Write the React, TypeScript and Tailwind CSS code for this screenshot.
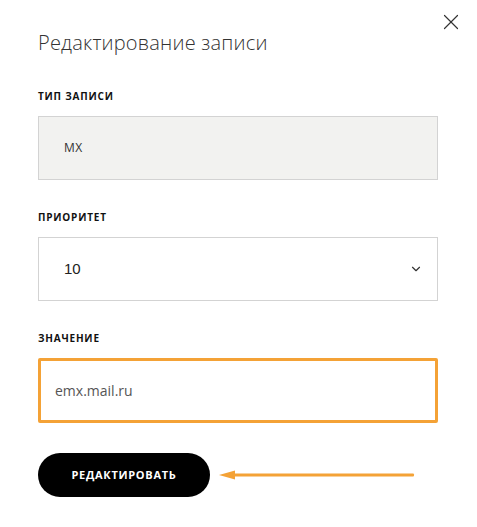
import { X, ChevronDown } from 'lucide-react';

const labelCls =
  "block mb-[13px] text-[10px] leading-[14px] font-bold tracking-[0.8px] text-[#111] uppercase";

export default function App() {
  return (
    <div className="relative w-[477px] h-[527px] bg-white font-['Open_Sans',sans-serif]">
      {/* close */}
      <button className="absolute top-[9px] right-[13px] text-[#333]">
        <X size={26} strokeWidth={1.1} />
      </button>

      <div className="pl-[38px] pr-[39px] pt-[29px]">
        <h1 className="text-[20px] leading-[28px] font-light text-[#333] tracking-[0.2px]">
          Редактирование записи
        </h1>

        {/* record type */}
        <label className={`${labelCls} mt-[32px]`}>Тип записи</label>
        <div className="h-[64px] flex items-center pl-[25px] bg-[#f2f2f0] border border-[#d3d3d3] text-[12px] text-[#333] tracking-[0.5px]">
          MX
        </div>

        {/* priority */}
        <label className={`${labelCls} mt-[30px]`}>Приоритет</label>
        <div className="h-[64px] flex items-center justify-between pl-[25px] pr-[14px] bg-white border border-[#d3d3d3]">
          <span className="text-[15px] text-[#222] font-['Liberation_Sans',sans-serif]">10</span>
          <ChevronDown size={14} strokeWidth={2} className="text-[#333]" />
        </div>

        {/* value */}
        <label className={`${labelCls} mt-[30px]`}>Значение</label>
        <div className="h-[65px] flex items-center pl-[14px] bg-white border-[3px] border-[#f4a236] rounded-[2px] text-[14px] text-[#555]">
          emx.mail.ru
        </div>

        <div className="mt-[30px] flex items-center">
          <button className="w-[172px] h-[44px] rounded-full bg-black text-white text-[11px] font-bold tracking-[0.7px]">
            РЕДАКТИРОВАТЬ
          </button>
          <svg width="196" height="12" viewBox="0 0 196 12" className="ml-[9px]">
            <polygon points="0,6 16,1.5 16,10.5" fill="#f4a236" />
            <rect x="14" y="4.5" width="181" height="3" rx="1" fill="#f4a236" />
          </svg>
        </div>
      </div>
    </div>
  );
}
